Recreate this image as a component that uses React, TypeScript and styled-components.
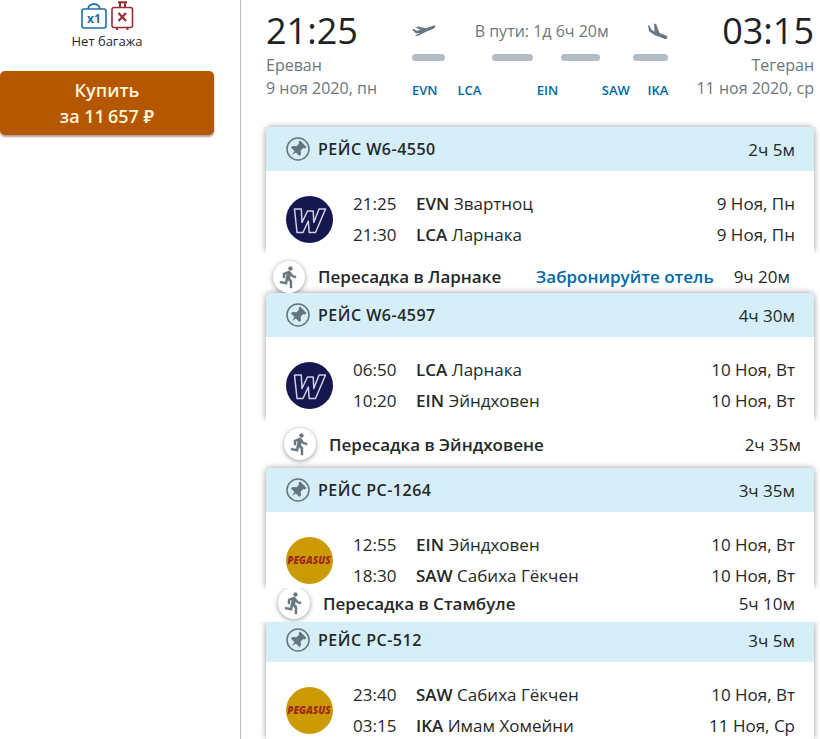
import React from 'react';
import styled, { createGlobalStyle } from 'styled-components';

const Global = createGlobalStyle`
  *, *::before, *::after { box-sizing: border-box; }
  body {
    margin: 0;
    background: #fff;
    color: #25282a;
    font-family: "Open Sans", "Noto Sans", sans-serif;
  }
  #root { overflow: hidden; }
  ul, ol, p, h2, h3 { margin: 0; padding: 0; list-style: none; }
`;

const Page = styled.div`
  display: flex;
  min-height: 100vh;
`;

const Sidebar = styled.aside`
  flex: none;
  width: 241px;
  padding: 1px 26px 0 0;
  border-right: 1px solid #b9bbbd;
`;

const Baggage = styled.div`
  display: flex;
  flex-direction: column;
  align-items: center;
  font-size: 13px;
  line-height: 20px;
`;

const BaggageIcons = styled.div`
  display: flex;
  gap: 4px;
  height: 30px;
`;

const BuyButton = styled.button`
  display: block;
  width: 100%;
  margin-top: 20px;
  padding: 6px 0;
  border: 0;
  border-radius: 5px;
  background: #b45700;
  box-shadow: 0 2px 2px rgba(90, 40, 20, 0.45);
  color: #fff3d8;
  font: 600 18px/26px "Open Sans", "Noto Sans", sans-serif;
  cursor: pointer;
  span { display: block; }
`;

const Main = styled.main`
  flex: 1;
  min-width: 0;
  padding: 0 6px 0 25px;
`;

const Summary = styled.header`
  display: flex;
  height: 127px;
  padding-top: 8px;
`;

const Endpoint = styled.div<{ $end?: boolean }>`
  flex: none;
  text-align: ${p => (p.$end ? 'right' : 'left')};
  color: #6c777d;
  font-size: 16px;
  line-height: 23px;
`;

const BigTime = styled.p`
  color: #202224;
  font-size: 36px;
  line-height: 46px;
`;

const Route = styled.div`
  flex: 1;
  margin: 0 28px 0 35px;
`;

const RouteTop = styled.div`
  display: flex;
  justify-content: space-between;
  align-items: center;
  height: 46px;
  color: #6c777d;
  font-size: 16px;
`;

const Track = styled.div`
  display: flex;
`;

const Leg = styled.span<{ $share: number }>`
  flex: ${p => p.$share} 1 0;
  height: 7px;
  border-radius: 4px;
  background: #b3bbc5;
`;

const Gap = styled.span<{ $share: number }>`
  flex: ${p => p.$share} 1 0;
`;

const Codes = styled.div`
  display: flex;
  margin-top: 19px;
  color: #0068a8;
  font-size: 13px;
  font-weight: 600;
  line-height: 20px;
`;

const Card = styled.section<{ $height: number; $cut?: boolean }>`
  height: ${p => p.$height}px;
  margin: ${p => (p.$cut ? 0 : -8)}px -8px 0;
  padding: ${p => (p.$cut ? 0 : 8)}px 8px 0;
  overflow: hidden;
`;

const CardBody = styled.div<{ $cut?: boolean }>`
  height: 100%;
  border-radius: ${p => (p.$cut ? '0' : '5px 5px 0 0')};
  background: #fff;
  box-shadow: 0 0 6px rgba(0, 0, 0, 0.4);
`;

const CardHead = styled.div<{ $cut?: boolean }>`
  display: flex;
  align-items: center;
  gap: 8px;
  height: ${p => (p.$cut ? 40 : 44)}px;
  padding: 0 19px ${p => (p.$cut ? 4 : 0)}px 20px;
  border-radius: inherit;
  background: #d6eef8;
  font-size: 17px;
`;

const FlightName = styled.h2`
  flex: 1;
  font-size: 16px;
  font-weight: 600;
  letter-spacing: 0.5px;
`;

const FlightInfo = styled.div`
  display: flex;
  align-items: center;
  gap: 20px;
  padding: 17px 19px 0 20px;
`;

const Stops = styled.ul`
  flex: 1;
  font-size: 17px;
  line-height: 31px;
`;

const Stop = styled.li`
  display: grid;
  grid-template-columns: 63px 1fr auto;
  b { font-weight: 600; }
`;

const Transfer = styled.div<{ $height: number; $inset: number; $top: number; $bottom: number }>`
  display: flex;
  align-items: center;
  height: ${p => p.$height}px;
  padding: ${p => p.$top}px ${p => 31 - p.$inset}px ${p => p.$bottom}px ${p => p.$inset}px;
  overflow: hidden;
  font-size: 17px;
`;

const RunBadge = styled.span`
  display: grid;
  place-items: center;
  flex: none;
  width: 32px;
  height: 32px;
  margin-right: 13px;
  border-radius: 50%;
  background: #fff;
  box-shadow: 0 1px 5px rgba(0, 0, 0, 0.4);
`;

const TransferName = styled.h3`
  flex: 1;
  font-size: 17px;
  font-weight: 600;
`;

const HotelLink = styled.a`
  margin-right: 20px;
  color: #0068a8;
  font-weight: 600;
  text-decoration: none;
`;

const CabinBag = () => (
  <svg width="26" height="30" viewBox="0 0 26 30" fill="none" stroke="#1c6ea8" strokeWidth="1.6" aria-hidden="true">
    <rect x="1" y="8" width="24" height="19" rx="2" />
    <path d="M7 8C8 1.500 18 1.500 19 8" />
    <text x="13" y="21.500" textAnchor="middle" fontSize="12" fontWeight="700" fill="#1c6ea8" stroke="none">x1</text>
  </svg>
);

const NoSuitcase = () => (
  <svg width="23" height="30" viewBox="0 0 23 30" fill="none" stroke="#9e2b31" strokeWidth="1.600" aria-hidden="true">
    <rect x="1" y="6.500" width="20.500" height="20" rx="2" />
    <path d="M7 1.300h9M9 1v5.500M14 1v5.500M6 26.500v2.500M16.500 26.500v2.500" strokeWidth="2" />
    <path d="M7.500 12l7.500 8M15 12l-7.500 8" strokeWidth="2.200" />
  </svg>
);

const TakeOff = () => (
  <svg width="24" height="12" viewBox="0 0 24 12" fill="#687780" aria-hidden="true">
    <path d="M0 4.500l2-.4 2.800 1.700 3.900-.9L3.600 2.400 6 1.600l7.800 1.700L20.300.9c1.600-.6 2.900-.4 3 .7.100.9-.8 1.600-2 2.100L14.500 6.500 5.600 11H2.800l5-3.200-3.700.6z" />
  </svg>
);

const Landing = () => (
  <svg width="21" height="17" viewBox="0 0 21 17" fill="#687780" aria-hidden="true">
    <path d="M1 2l1.600.7 1.500 3.600 3.400 2.500L7 .5l2.200.8 3.300 8.800 6 2.200c1.600.6 2.200 1.700 1.800 2.700-.4 1-1.500 1.200-2.900.7L7.500 12 2 8.300z" />
  </svg>
);

const Pin = () => (
  <svg width="24" height="24" viewBox="0 0 24 24" aria-hidden="true">
    <circle cx="12" cy="12" r="11" fill="none" stroke="#65747d" strokeWidth="1.500" />
    <path
      transform="rotate(45 12 12)"
      d="M7.500 4.500h9v2.200l-1.500.8v3.700l3 2.600v2.200h-5L12 20.500 11 16H6v-2.200l3-2.600V7.500l-1.500-.8z"
      fill="#65747d"
    />
  </svg>
);

const Runner = () => (
  <svg width="24" height="24" viewBox="0 0 24 24" fill="#687780" aria-hidden="true">
    <path
      stroke="#687780" strokeWidth="0.400"
      d="M13.490 5.480c1.100 0 2-.9 2-2s-.9-2-2-2-2 .9-2 2 .9 2 2 2zm-3.600 13.900l1-4.400 2.100 2v6h2v-7.500l-2.100-2 .6-3c1.300 1.500 3.300 2.500 5.500 2.500v-2c-1.900 0-3.500-1-4.300-2.400l-1-1.600c-.4-.6-1-1-1.700-1-.3 0-.5.1-.8.1l-5.200 2.200v4.700h2v-3.400l1.800-.7-1.600 8.100-4.900-1-.4 2 7 1.400z"
    />
  </svg>
);

const WizzLogo = () => (
  <svg width="47" height="47" viewBox="0 0 47 47" role="img" aria-label="Wizz Air">
    <circle cx="23.500" cy="23.500" r="23.500" fill="#171750" />
    <path
      d="M8.500 13h6.800l.7 13.500 5.500-11.500h5.700l.6 11.500L33 13h6.500L29.500 36.500h-6.300L22.300 25 17 36.500h-6z"
      fill="none" stroke="#cfcfe8" strokeWidth="1.500" strokeLinejoin="round"
    />
  </svg>
);

const PegasusLogo = () => (
  <svg width="47" height="47" viewBox="0 0 47 47" role="img" aria-label="Pegasus">
    <circle cx="23.500" cy="23.500" r="23.500" fill="#cb9a05" />
    <text x="23" y="27" textAnchor="middle" fontSize="10" fontWeight="800" fontStyle="italic" fill="#a02a18">PEGASUS</text>
  </svg>
);

type StopData = { time: string; code: string; place: string; date: string };
type FlightProps = { name: string; duration: string; airline: 'wizz' | 'pegasus'; height: number; cut?: boolean; stops: StopData[] };

const Flight = ({ name, duration, airline, height, cut, stops }: FlightProps) => (
  <Card $height={cut ? height : height + 8} $cut={cut}>
    <CardBody $cut={cut}>
      <CardHead $cut={cut}>
        <Pin />
        <FlightName>{name}</FlightName>
        <span>{duration}</span>
      </CardHead>
      <FlightInfo>
        {airline === 'wizz' ? <WizzLogo /> : <PegasusLogo />}
        <Stops>
          {stops.map(s => (
            <Stop key={s.code}>
              <time>{s.time}</time>
              <span><b>{s.code}</b> {s.place}</span>
              <span>{s.date}</span>
            </Stop>
          ))}
        </Stops>
      </FlightInfo>
    </CardBody>
  </Card>
);

type ChangeProps = { text: string; time: string; height: number; inset: number; top?: number; bottom?: number; hotel?: string };

const Change = ({ text, time, height, inset, top = 0, bottom = 0, hotel }: ChangeProps) => (
  <Transfer $height={height} $inset={inset} $top={top} $bottom={bottom}>
    <RunBadge><Runner /></RunBadge>
    <TransferName>{text}</TransferName>
    {hotel && <HotelLink href="#hotel">{hotel}</HotelLink>}
    <span>{time}</span>
  </Transfer>
);

export default function App() {
  return (
    <>
      <Global />
      <Page>
        <Sidebar>
          <Baggage>
            <BaggageIcons><CabinBag /><NoSuitcase /></BaggageIcons>
            <p>Нет багажа</p>
          </Baggage>
          <BuyButton type="button"><span>Купить</span><span>за 11{'\u2009'}657 ₽</span></BuyButton>
        </Sidebar>
        <Main>
          <Summary>
            <Endpoint>
              <BigTime>21:25</BigTime>
              <p>Ереван</p>
              <p>9 ноя 2020, пн</p>
            </Endpoint>
            <Route>
              <RouteTop><TakeOff /><span>В пути: 1д 6ч 20м</span><Landing /></RouteTop>
              <Track>
                <Leg $share={33} /><Gap $share={47} /><Leg $share={41} /><Gap $share={28} />
                <Leg $share={39} /><Gap $share={33} /><Leg $share={36} />
              </Track>
              <Codes>
                <span>EVN</span><Gap $share={20} /><span>LCA</span><Gap $share={56} /><span>EIN</span>
                <Gap $share={44} /><span>SAW</span><Gap $share={18} /><span>IKA</span>
              </Codes>
            </Route>
            <Endpoint $end>
              <BigTime>03:15</BigTime>
              <p>Тегеран</p>
              <p>11 ноя 2020, ср</p>
            </Endpoint>
          </Summary>
          <Flight name="РЕЙС W6-4550" duration="2ч 5м" airline="wizz" height={125} stops={[
            { time: '21:25', code: 'EVN', place: 'Звартноц', date: '9 Ноя, Пн' },
            { time: '21:30', code: 'LCA', place: 'Ларнака', date: '9 Ноя, Пн' },
          ]} />
          <Change text="Пересадка в Ларнаке" hotel="Забронируйте отель" time="9ч 20м" height={41} inset={7} top={8} />
          <Flight name="РЕЙС W6-4597" duration="4ч 30м" airline="wizz" height={127} stops={[
            { time: '06:50', code: 'LCA', place: 'Ларнака', date: '10 Ноя, Вт' },
            { time: '10:20', code: 'EIN', place: 'Эйндховен', date: '10 Ноя, Вт' },
          ]} />
          <Change text="Пересадка в Эйндховене" time="2ч 35м" height={48} inset={18} />
          <Flight name="РЕЙС PC-1264" duration="3ч 35м" airline="pegasus" height={120} stops={[
            { time: '12:55', code: 'EIN', place: 'Эйндховен', date: '10 Ноя, Вт' },
            { time: '18:30', code: 'SAW', place: 'Сабиха Гёкчен', date: '10 Ноя, Вт' },
          ]} />
          <Change text="Пересадка в Стамбуле" time="5ч 10м" height={34} inset={12} bottom={4} />
          <Flight name="РЕЙС PC-512" duration="3ч 5м" airline="pegasus" height={117} cut stops={[
            { time: '23:40', code: 'SAW', place: 'Сабиха Гёкчен', date: '10 Ноя, Вт' },
            { time: '03:15', code: 'IKA', place: 'Имам Хомейни', date: '11 Ноя, Ср' },
          ]} />
        </Main>
      </Page>
    </>
  );
}
